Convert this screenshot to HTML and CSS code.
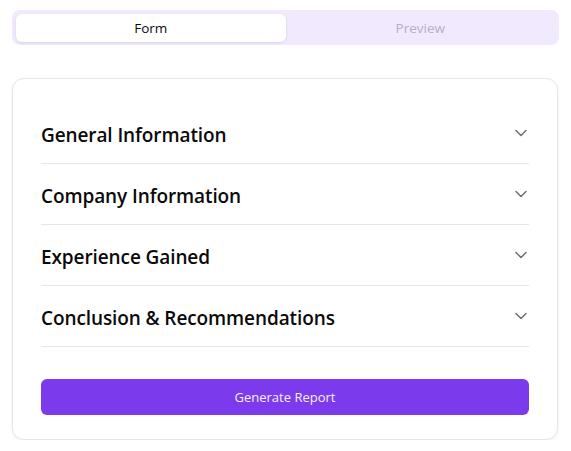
FILE: index.html
```html
<!DOCTYPE html>
<html>
<head>
<meta charset="utf-8">
<link rel="stylesheet" href="styles.css">
</head>
<body>
<div class="page">
  <div class="tabs">
    <button class="tab active">Form</button>
    <button class="tab">Preview</button>
  </div>
  <div class="card">
    <div class="section">
      <span class="title">General Information</span>
      <svg class="chev" viewBox="0 0 24 24" width="20" height="20"><path d="m6 9 6 6 6-6"/></svg>
    </div>
    <div class="section">
      <span class="title">Company Information</span>
      <svg class="chev" viewBox="0 0 24 24" width="20" height="20"><path d="m6 9 6 6 6-6"/></svg>
    </div>
    <div class="section">
      <span class="title">Experience Gained</span>
      <svg class="chev" viewBox="0 0 24 24" width="20" height="20"><path d="m6 9 6 6 6-6"/></svg>
    </div>
    <div class="section">
      <span class="title">Conclusion &amp; Recommendations</span>
      <svg class="chev" viewBox="0 0 24 24" width="20" height="20"><path d="m6 9 6 6 6-6"/></svg>
    </div>
    <button class="generate">Generate Report</button>
  </div>
</div>
</body>
</html>
```
FILE: styles.css
```css
* { box-sizing: border-box; }
html, body { margin: 0; padding: 0; background: #fff; }
body { font-family: "Open Sans", "Noto Sans", sans-serif; color: #0a0a0a; }
.page { padding: 10px 12px 0 12px; width: 571px; }
.tabs {
  display: grid;
  grid-template-columns: 1fr 1fr;
  background: #f1e9fd;
  border-radius: 8px;
  padding: 4px;
  width: 547px;
  height: 35px;
}
.tab {
  border: 0;
  background: transparent;
  font-family: inherit;
  font-size: 13.5px;
  color: #b3b1c3;
  border-radius: 6px;
  height: 28px;
  padding: 0;
}
.tab.active {
  background: #fff;
  color: #0a0a0a;
  box-shadow: 0 1px 3px rgba(0,0,0,0.1);
}
.card {
  margin-top: 33px;
  width: 546px;
  border: 1px solid #e5e5ea;
  border-radius: 12px;
  box-shadow: 0 1px 3px rgba(0,0,0,0.08);
  padding: 24px 28px 24px 28px;
  display: flex;
  flex-direction: column;
}
.section {
  display: flex;
  align-items: center;
  justify-content: space-between;
  height: 61px;
  border-bottom: 1px solid #e6e6ea;
}
.title {
  font-size: 19px;
  font-weight: 600;
  letter-spacing: -0.1px;
  padding-top: 3px;
}
.chev {
  fill: none;
  stroke: #6b6f78;
  stroke-width: 1.8;
  stroke-linecap: round;
  stroke-linejoin: round;
  margin-right: -2px;
}
.generate {
  margin-top: 32px;
  height: 36px;
  border: 0;
  border-radius: 6px;
  background: #7c3aed;
  color: #f5f0ff;
  font-family: inherit;
  font-size: 13px;
}
```
